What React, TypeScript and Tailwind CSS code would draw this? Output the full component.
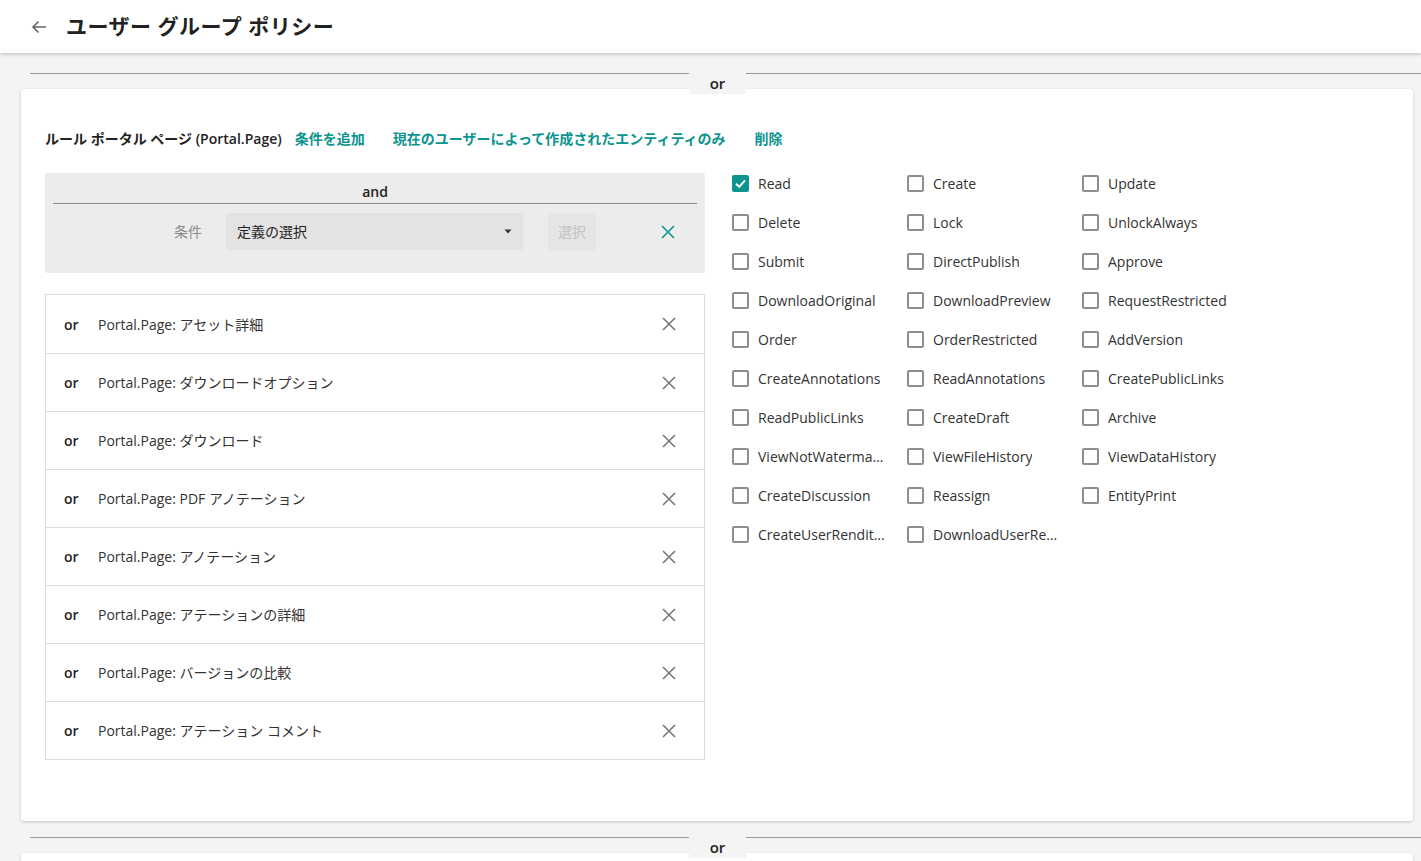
import * as React from 'react'

const TEAL = 'text-[#0e948e]'

const PERMS: { label: string; checked?: boolean }[] = [
  { label: 'Read', checked: true },
  { label: 'Create' },
  { label: 'Update' },
  { label: 'Delete' },
  { label: 'Lock' },
  { label: 'UnlockAlways' },
  { label: 'Submit' },
  { label: 'DirectPublish' },
  { label: 'Approve' },
  { label: 'DownloadOriginal' },
  { label: 'DownloadPreview' },
  { label: 'RequestRestricted' },
  { label: 'Order' },
  { label: 'OrderRestricted' },
  { label: 'AddVersion' },
  { label: 'CreateAnnotations' },
  { label: 'ReadAnnotations' },
  { label: 'CreatePublicLinks' },
  { label: 'ReadPublicLinks' },
  { label: 'CreateDraft' },
  { label: 'Archive' },
  { label: 'ViewNotWatermarked' },
  { label: 'ViewFileHistory' },
  { label: 'ViewDataHistory' },
  { label: 'CreateDiscussion' },
  { label: 'Reassign' },
  { label: 'EntityPrint' },
  { label: 'CreateUserRenditions' },
  { label: 'DownloadUserRenditions' },
]

const PAGES = [
  'アセット詳細',
  'ダウンロードオプション',
  'ダウンロード',
  'PDF アノテーション',
  'アノテーション',
  'アテーションの詳細',
  'バージョンの比較',
  'アテーション コメント',
]

function XIcon({ className }: { className?: string }) {
  return (
    <svg width="16" height="16" viewBox="0 0 16 16" className={className}>
      <path d="M2 2 L14 14 M14 2 L2 14" stroke="currentColor" strokeWidth="1.6" fill="none" />
    </svg>
  )
}

function OrDivider() {
  return (
    <div className="relative h-[16px] ml-[30px]">
      <div className="border-t border-[#9a9a9a]" />
      <div className="absolute left-[659px] top-0 w-[57px] h-[21px] bg-[#f4f4f4] flex items-center justify-center text-[15px] font-semibold text-[#222]">
        or
      </div>
    </div>
  )
}

function Checkbox({ label, checked }: { label: string; checked?: boolean }) {
  return (
    <label className="flex items-center h-[39px] gap-[9px] w-[175px]">
      {checked ? (
        <span className="w-[17px] h-[17px] rounded-[2px] bg-[#0e948e] flex items-center justify-center shrink-0">
          <svg width="13" height="13" viewBox="0 0 13 13">
            <path d="M2 6.8 L5.2 9.8 L11 3.4" stroke="#fff" strokeWidth="2" fill="none" />
          </svg>
        </span>
      ) : (
        <span className="w-[17px] h-[17px] rounded-[2px] border-2 border-[#8e8e8e] bg-white shrink-0" />
      )}
      <span className="text-[14px] text-[#333] truncate max-w-[127px]">{label}</span>
    </label>
  )
}

export default function App() {
  return (
    <div
      className="bg-[#f4f4f4] overflow-hidden h-[861px]"
      style={{ fontFamily: '"Open Sans", "Noto Sans CJK JP", sans-serif' }}
    >
      {/* Header */}
      <div className="h-[53px] bg-white shadow-[0_1px_4px_rgba(0,0,0,0.25)] flex items-center relative z-10">
        <svg width="20" height="20" viewBox="0 0 20 20" className="ml-[29px] text-[#666]">
          <path d="M17 10 H4 M9.5 4.5 L4 10 L9.5 15.5" stroke="currentColor" strokeWidth="1.6" fill="none" />
        </svg>
        <h1 className="ml-[17px] text-[21px] font-bold text-[#222] tracking-[0.5px]">
          ユーザー グループ ポリシー
        </h1>
      </div>

      <div className="pt-[20px]">
        <OrDivider />

        {/* Rule card */}
        <div className="mx-[21px] w-[1392px] bg-white rounded-[3px] shadow-[0_1px_3px_rgba(0,0,0,0.2)] h-[732px] pt-[40px] px-[24px]">
          <div className="flex items-center h-[18px] text-[14px]">
            <span className="font-semibold text-[#222]">ルール ポータル ページ (Portal.Page)</span>
            <span className={`ml-[13px] font-bold ${TEAL}`}>条件を追加</span>
            <span className={`ml-[28px] font-bold ${TEAL}`}>現在のユーザーによって作成されたエンティティのみ</span>
            <span className={`ml-[29px] font-bold ${TEAL}`}>削除</span>
          </div>

          <div className="flex items-start mt-[26px]">
            {/* Left */}
            <div className="w-[660px] shrink-0">
              <div className="bg-[#ececec] rounded-[3px] h-[100px] px-[8px] pt-[8px]">
                <div className="text-center text-[14px] font-semibold text-[#222] h-[23px] border-b border-[#8a8a8a]">
                  and
                </div>
                <div className="flex items-center mt-[9px] h-[37px]">
                  <span className="ml-[121px] text-[14px] text-[#8a8a8a]">条件</span>
                  <div className="ml-[24px] w-[297px] h-[37px] bg-[#e3e3e3] rounded-[3px] flex items-center justify-between px-[11px]">
                    <span className="text-[14px] text-[#222]">定義の選択</span>
                    <svg width="8" height="5" viewBox="0 0 8 5">
                      <path d="M0.5 0.5 L7.5 0.5 L4 4.5 Z" fill="#333" />
                    </svg>
                  </div>
                  <div className="ml-[25px] w-[48px] h-[36px] bg-[#e5e5e5] rounded-[3px] flex items-center justify-center text-[14px] text-[#c2c2c2]">
                    選択
                  </div>
                  <XIcon className="ml-[64px] text-[#0e948e]" />
                </div>
              </div>

              <div className="mt-[21px] border border-[#dcdcdc]">
                {PAGES.map((p, i) => (
                  <div
                    key={p}
                    className={`flex items-center h-[58px] pl-[18px] pr-[27px] text-[14px] ${i > 0 ? 'border-t border-[#dcdcdc]' : ''}`}
                  >
                    <span className="font-semibold text-[#222] w-[34px]">or</span>
                    <span className="text-[#333] flex-1">Portal.Page: {p}</span>
                    <XIcon className="text-[#777]" />
                  </div>
                ))}
              </div>
            </div>

            {/* Right */}
            <div className="ml-[27px] -mt-[9px] grid grid-cols-[175px_175px_175px] auto-rows-[39px]">
              {PERMS.map((p) => (
                <Checkbox key={p.label} label={p.label} checked={p.checked} />
              ))}
            </div>
          </div>
        </div>

        <div className="mt-[16px]">
          <OrDivider />
        </div>
        <div className="mx-[21px] w-[1392px] bg-white rounded-[3px] shadow-[0_1px_3px_rgba(0,0,0,0.2)] h-[40px]" />
      </div>
    </div>
  )
}
